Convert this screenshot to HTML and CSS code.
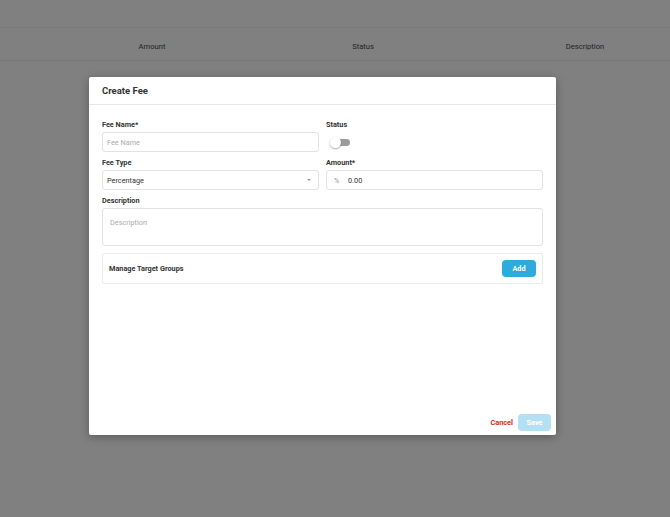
FILE: index.html
```html
<!DOCTYPE html>
<html>
<head>
  <meta charset="utf-8">
  <link rel="stylesheet" href="styles.css">
</head>
<body>
  <div class="page">
    <div class="table-head">
      <div class="col">Amount</div>
      <div class="col">Status</div>
      <div class="col col-desc">Description</div>
    </div>
  </div>

  <!-- Create Fee Modal -->
  <div class="modal">
    <div class="modal-header">
      <h2 class="modal-title">Create Fee</h2>
    </div>

    <div class="modal-body">
      <div class="form-grid">
        <div class="field">
          <label class="label">Fee Name*</label>
          <div class="input placeholder">Fee Name</div>
        </div>
        <div class="field">
          <label class="label">Status</label>
          <div class="toggle-row">
            <div class="toggle">
              <div class="knob"></div>
            </div>
          </div>
        </div>

        <div class="field">
          <label class="label">Fee Type</label>
          <div class="input select">
            <span>Percentage</span>
            <span class="caret"></span>
          </div>
        </div>
        <div class="field">
          <label class="label">Amount*</label>
          <div class="input amount">
            <span class="prefix">%</span>
            <span>0.00</span>
          </div>
        </div>

        <div class="field field-wide">
          <label class="label">Description</label>
          <div class="textarea placeholder">Description</div>
        </div>
      </div>

      <div class="target-box">
        <span class="target-title">Manage Target Groups</span>
        <button class="button primary">Add</button>
      </div>
    </div>

    <div class="modal-footer">
      <button class="button link-danger">Cancel</button>
      <button class="button primary disabled">Save</button>
    </div>
  </div>
</body>
</html>
```

FILE: styles.css
```css
body {
  margin: 0;
  height: 517px;
  background: #808080;
  font-family: Roboto, "Liberation Sans", Arial, sans-serif;
  color: #333333;
  overflow: hidden;
}

.page {
  padding-top: 27px;
}

.table-head {
  display: grid;
  grid-template-columns: 224px 198px 208px;
  padding: 5px 0 0 40px;
  height: 27px;
  align-items: center;
  border-top: 1px solid #787878;
  border-bottom: 1px solid #777777;
  font-size: 7.6px;
  color: #232323;
}

.col {
  text-align: center;
}

.col-desc {
  padding-left: 38px;
}

/* Modal */
.modal {
  position: absolute;
  left: 89px;
  top: 77px;
  width: 467px;
  height: 358px;
  background: #ffffff;
  border-radius: 2px;
  box-shadow: 0 2px 10px rgba(0, 0, 0, 0.3);
  display: flex;
  flex-direction: column;
}

.modal-header {
  height: 27px;
  padding: 0 13px;
  display: flex;
  align-items: center;
  border-bottom: 1px solid #e8e8e8;
}

.modal-title {
  margin: 0;
  font-size: 9.5px;
  font-weight: 700;
  color: #333333;
}

.modal-body {
  flex: 1;
  padding: 13px 13px 0;
}

.form-grid {
  display: grid;
  grid-template-columns: 217px 217px;
  column-gap: 7px;
  row-gap: 4px;
}

.field-wide {
  grid-column: span 2;
}

.label {
  display: block;
  height: 14px;
  line-height: 13px;
  font-size: 7.3px;
  font-weight: 700;
  color: #333333;
}

.input {
  box-sizing: border-box;
  height: 20px;
  border: 1px solid #e2e2e2;
  border-radius: 3px;
  padding: 0 4px;
  display: flex;
  align-items: center;
  font-size: 7.3px;
  color: #333333;
}

.placeholder {
  color: #ababab;
}

.select {
  justify-content: space-between;
  padding-right: 7px;
}

.caret {
  width: 0;
  height: 0;
  border-left: 2.5px solid transparent;
  border-right: 2.5px solid transparent;
  border-top: 2.5px solid #9a9a9a;
}

.amount {
  padding-left: 7px;
}

.prefix {
  color: #9a9a9a;
  width: 14px;
}

.textarea {
  box-sizing: border-box;
  height: 38px;
  border: 1px solid #e2e2e2;
  border-radius: 3px;
  padding: 9px 7px;
  font-size: 7.3px;
}

.toggle-row {
  height: 20px;
  display: flex;
  align-items: center;
  padding-left: 7px;
}

.toggle {
  position: relative;
  width: 17px;
  height: 7px;
  border-radius: 4px;
  background: #9b9b9b;
}

.knob {
  position: absolute;
  left: -3px;
  top: -2px;
  width: 11px;
  height: 11px;
  border-radius: 50%;
  background: #ffffff;
  box-shadow: 0 1px 2px rgba(0, 0, 0, 0.35);
}

.target-box {
  box-sizing: border-box;
  margin-top: 7px;
  height: 31px;
  border: 1px solid #ececec;
  border-radius: 2px;
  padding: 0 6px;
  display: flex;
  justify-content: space-between;
  align-items: center;
}

.target-title {
  font-size: 7.3px;
  font-weight: 700;
  color: #333333;
}

.button {
  border: none;
  height: 17px;
  padding: 0;
  border-radius: 4px;
  font-family: inherit;
  font-size: 7.3px;
  font-weight: 700;
  cursor: pointer;
}

.button.primary {
  width: 34px;
  background: #2eaadd;
  color: #ffffff;
}

.button.primary.disabled {
  width: 33px;
  background: #b3e0f3;
  cursor: not-allowed;
}

.button.link-danger {
  background: none;
  color: #d42a1c;
  padding: 0 1px;
}

.modal-footer {
  display: flex;
  justify-content: flex-end;
  align-items: center;
  gap: 4px;
  padding: 0 5px 4px;
}
```
